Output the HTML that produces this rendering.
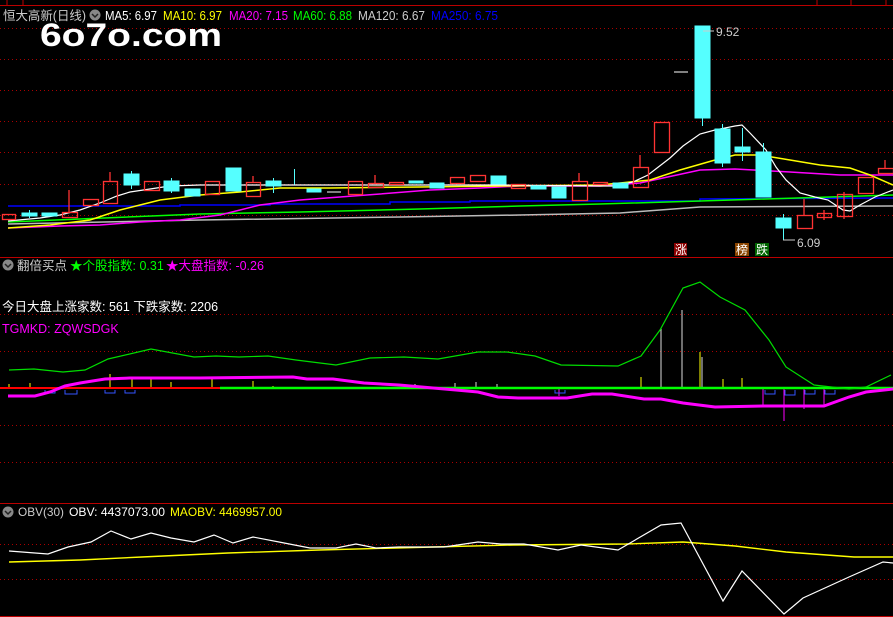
<!DOCTYPE html><html><head><meta charset="utf-8"><style>
body{margin:0;background:#000;width:893px;height:617px;overflow:hidden;font-family:"Liberation Sans","Noto Sans CJK SC",sans-serif}
svg{display:block}
text{font-family:"Liberation Sans","Noto Sans CJK SC",sans-serif}
</style></head><body>
<svg width="893" height="617" viewBox="0 0 893 617" xmlns="http://www.w3.org/2000/svg">
<rect width="893" height="617" fill="#000"/>
<g stroke="#b00" fill="none">
<line x1="0" y1="5.5" x2="893" y2="5.5"/>
<line x1="0" y1="257.5" x2="893" y2="257.5"/>
<line x1="0" y1="503.5" x2="893" y2="503.5"/>
<line x1="0" y1="616.5" x2="893" y2="616.5"/>
<path d="M817 0V5M851 0V5M886 0V5M7 0V5M23 0V5"/>
</g>
<g stroke="#a00" stroke-dasharray="1,3" fill="none">
<path d="M0 28.5H893M0 59.5H893M0 90.5H893M0 121.5H893M0 152.5H893M0 184.5H893M0 215.5H893"/>
<path d="M0 314.5H893M0 351.5H893M0 425.5H893M0 462.5H893"/>
<path d="M0 544.5H893M0 579.5H893"/>
</g>
<g fill="none" stroke-width="1.5">
<polyline stroke="#0000ff" points="8,206 180,206 180,205 270,205 270,204 390,204 390,202 470,202 470,201 700,201 700,199 893,198"/>
<polyline stroke="#bbb" points="8,224 200,220 400,217 520,215 620,213 700,207 893,206"/>
<polyline stroke="#00ff00" points="8,222 200,214 300,212 420,209 520,206 600,204 700,201 830,197 893,195"/>
<polyline stroke="#ff00ff" points="8,228 60,226 100,225 140,222 180,220 220,215 260,205 300,200 340,197 380,194 430,190 480,188 520,186 600,186 640,183 700,170 735,169 790,172 840,175 893,175"/>
<polyline stroke="#ffff00" points="8,228 50,225 90,220 120,210 140,205 160,200 200,195 240,192 280,188 330,188 420,187 500,186 600,185 650,180 680,170 715,160 735,155 760,155 790,160 820,165 850,168 870,175 893,185"/>
<polyline stroke="#fff" stroke-width="1.2" points="8,221 40,218 60,215 80,210 100,203 117,196 130,192 150,189 170,186 200,185 300,185 400,185 500,185 600,186 613,186 633,182 648,175 670,158 683,146 700,134 715,130 735,126 742,125 750,133 766,150 776,167 786,180 800,193 815,197 828,200 843,210 850,211 860,205 875,197 893,190"/>
</g>
<g stroke="#ff3333" fill="none" stroke-width="1.3">
<rect x="2.5" y="214.5" width="13" height="5"/>
<path d="M69 190V212"/><rect x="62.5" y="212.5" width="15" height="5"/>
<rect x="83.5" y="199.5" width="15" height="6"/>
<path d="M110 172V181"/><rect x="103.5" y="181.5" width="14" height="22"/>
<rect x="144.5" y="181.5" width="15" height="9"/>
<rect x="205.5" y="181.5" width="14" height="13"/>
<path d="M253 176V182"/><rect x="246.5" y="182.5" width="14" height="14"/>
<rect x="348.5" y="181.5" width="14" height="13"/>
<path d="M375 175V183"/><rect x="368.5" y="183.5" width="15" height="4"/>
<rect x="389.5" y="182.5" width="14" height="2"/>
<rect x="450.5" y="177.5" width="14" height="6"/>
<rect x="470.5" y="175.5" width="15" height="6"/>
<rect x="511.5" y="184.5" width="14" height="4"/>
<path d="M579 173V181"/><rect x="572.5" y="181.5" width="15" height="19"/>
<rect x="593.5" y="182.5" width="14" height="2"/>
<path d="M640 155V167"/><rect x="633.5" y="167.5" width="15" height="20"/>
<rect x="654.5" y="122.5" width="15" height="30"/>
<path d="M804 199V215"/><rect x="797.5" y="215.5" width="15" height="13"/>
<path d="M824 210V220"/><rect x="817.5" y="213.5" width="14" height="4"/>
<path d="M844 192V219"/><rect x="837.5" y="194.5" width="15" height="22"/>
<rect x="858.5" y="177.5" width="15" height="16"/>
<path d="M885 160V168"/><rect x="878.5" y="168.5" width="15" height="5"/>
</g>
<g fill="#55ffff" stroke="#55ffff">
<rect x="22" y="213" width="15" height="3"/><path d="M29.5 210V218" fill="none"/>
<rect x="42" y="213" width="15" height="3"/>
<rect x="124" y="174" width="15" height="11"/><path d="M131.5 171V189" fill="none"/>
<rect x="164" y="181" width="15" height="10"/><path d="M171.5 178V193" fill="none"/>
<rect x="185" y="189" width="15" height="7"/>
<rect x="226" y="168" width="15" height="23"/>
<rect x="266" y="181" width="15" height="5"/><path d="M273.5 178V193" fill="none"/>
<path d="M294.5 169V185" fill="none"/>
<rect x="307" y="189" width="14" height="3"/>
<rect x="409" y="181" width="14" height="2"/>
<rect x="430" y="183" width="14" height="5"/>
<rect x="491" y="176" width="15" height="8"/>
<rect x="531" y="186" width="15" height="3"/>
<rect x="552" y="187" width="14" height="11"/>
<rect x="613" y="183" width="15" height="5"/>
<rect x="695" y="26" width="15" height="92"/><path d="M702.5 118V126" fill="none"/>
<rect x="715" y="129" width="15" height="34"/><path d="M722.5 124V167" fill="none"/>
<rect x="735" y="147" width="15" height="5"/><path d="M742.5 128V161" fill="none"/>
<rect x="756" y="152" width="15" height="45"/><path d="M763.5 143V152" fill="none"/>
<rect x="776" y="218" width="15" height="10"/><path d="M783.5 214V240" fill="none"/>
</g>
<g stroke="#fff" fill="none"><path d="M289 185H300M327 192H341M674 72H688"/></g>
<g fill="#ccc" font-size="12">
<path d="M703 31H714M783 240H795" stroke="#ccc"/>
<text x="716" y="36">9.52</text>
<text x="797" y="247">6.09</text>
</g>
<rect x="674" y="243" width="13" height="13" fill="#8b0000"/>
<rect x="735" y="243" width="14" height="13" fill="#8b4500"/>
<rect x="755" y="243" width="14" height="13" fill="#006400"/>
<g fill="#fff" font-size="12"><text x="675" y="254">涨</text><text x="736" y="254">榜</text><text x="756" y="254">跌</text></g>
<g font-size="12.5">
<text x="3" y="20" fill="#ccc" textLength="83" lengthAdjust="spacingAndGlyphs">恒大高新(日线)</text>
<circle cx="95" cy="15" r="5.5" fill="#888"/><path d="M92 14l3 3 3-3" stroke="#222" fill="none" stroke-width="1.5"/>
<text x="105" y="20" fill="#fff" textLength="52" lengthAdjust="spacingAndGlyphs">MA5: 6.97</text>
<text x="163" y="20" fill="#ffff00" textLength="59" lengthAdjust="spacingAndGlyphs">MA10: 6.97</text>
<text x="229" y="20" fill="#ff00ff" textLength="59" lengthAdjust="spacingAndGlyphs">MA20: 7.15</text>
<text x="293" y="20" fill="#00ff00" textLength="59" lengthAdjust="spacingAndGlyphs">MA60: 6.88</text>
<text x="358" y="20" fill="#ccc" textLength="67" lengthAdjust="spacingAndGlyphs">MA120: 6.67</text>
<text x="431" y="20" fill="#0000ff" textLength="67" lengthAdjust="spacingAndGlyphs">MA250: 6.75</text>
</g>
<text x="40" y="46" fill="#fff" font-size="32" font-weight="bold" textLength="182" lengthAdjust="spacingAndGlyphs">6o7o.com</text>
<g font-size="12.5">
<circle cx="8" cy="265" r="5.5" fill="#888"/><path d="M5 264l3 3 3-3" stroke="#222" fill="none" stroke-width="1.5"/>
<text x="17" y="270" fill="#ccc">翻倍买点</text>
<text x="70" y="270" fill="#00ff00">★个股指数: 0.31</text>
<text x="166" y="270" fill="#ff00ff">★大盘指数: -0.26</text>
<text x="2" y="311" fill="#fff">今日大盘上涨家数: 561 下跌家数: 2206</text>
<text x="2" y="333" fill="#ff00ff">TGMKD: ZQWSDGK</text>
</g>
<g stroke-width="1" fill="none">
<path stroke="#ffff00" d="M9 388V384M30 388V383M110 388V374M132 388V378M151 388V377M171 388V382M212 388V377M253 388V381M273 388V386M641 388V377M723 388V379M742 388V378M700 388V352"/>
<path stroke="#ddd" d="M661 388V328M682 388V310M702 388V357M415 388V384M455 388V383M476 388V382M497 388V384"/>
<path stroke="#ff00ff" d="M559 388V396M763 388V406M784 388V421M804 388V409M824 388V407"/>
<path stroke="#3355ff" d="M45 390v3h10v-3M65 390v4h12v-4M105 390v3h10v-3M125 390v3h10v-3M555 390v3h10v-3M765 390v4h10v-4M785 390v5h10v-5M805 390v4h10v-4M825 390v4h10v-4"/>
</g>
<path d="M0 388H220" stroke="#ff0000" stroke-width="2"/>
<path d="M220 388H893" stroke="#00ff00" stroke-width="2.5"/>
<polyline fill="none" stroke="#00dd00" stroke-width="1.2" points="9,370 34,369 63,372 85,370 108,359 151,349 194,357 216,356 239,357 268,356 296,360 336,365 370,358 404,357 438,359 478,352 507,352 535,356 561,365 618,366 641,356 660,330 683,288 700,282 720,297 745,310 769,340 786,367 814,385 849,389 866,387 891,375"/>
<polyline fill="none" stroke="#ff00ff" stroke-width="3" points="8,396 35,396 50,392 65,386 80,383 105,379 130,378 200,378 293,377 307,379 333,379 364,383 399,385 433,388 456,390 478,392 498,397 518,398 567,398 592,394 612,394 644,399 661,399 683,403 715,407 763,406 824,406 849,397 866,392 893,389"/>
<g font-size="12">
<circle cx="8" cy="512" r="5.5" fill="#888"/><path d="M5 511l3 3 3-3" stroke="#222" fill="none" stroke-width="1.5"/>
<text x="18" y="516" fill="#ccc" textLength="46" lengthAdjust="spacingAndGlyphs">OBV(30)</text>
<text x="69" y="516" fill="#fff" textLength="96" lengthAdjust="spacingAndGlyphs">OBV: 4437073.00</text>
<text x="170" y="516" fill="#ffff00" textLength="112" lengthAdjust="spacingAndGlyphs">MAOBV: 4469957.00</text>
</g>
<polyline fill="none" stroke="#ffff00" stroke-width="1.4" points="9,562 80,560 142,557 228,553 319,550 433,547 513,545 626,544 683,542 735,546 786,552 854,557 893,557"/>
<polyline fill="none" stroke="#fff" stroke-width="1.2" points="9,551 48,554 68,547 91,542 111,531 131,539 151,533 171,538 194,542 214,535 233,543 253,537 279,542 310,548 336,548 356,544 376,548 399,547 444,547 478,542 501,544 524,544 558,550 581,545 618,550 661,525 681,523 723,601 742,571 784,614 803,598 849,577 883,562 893,563"/>
</svg>
</body></html>
